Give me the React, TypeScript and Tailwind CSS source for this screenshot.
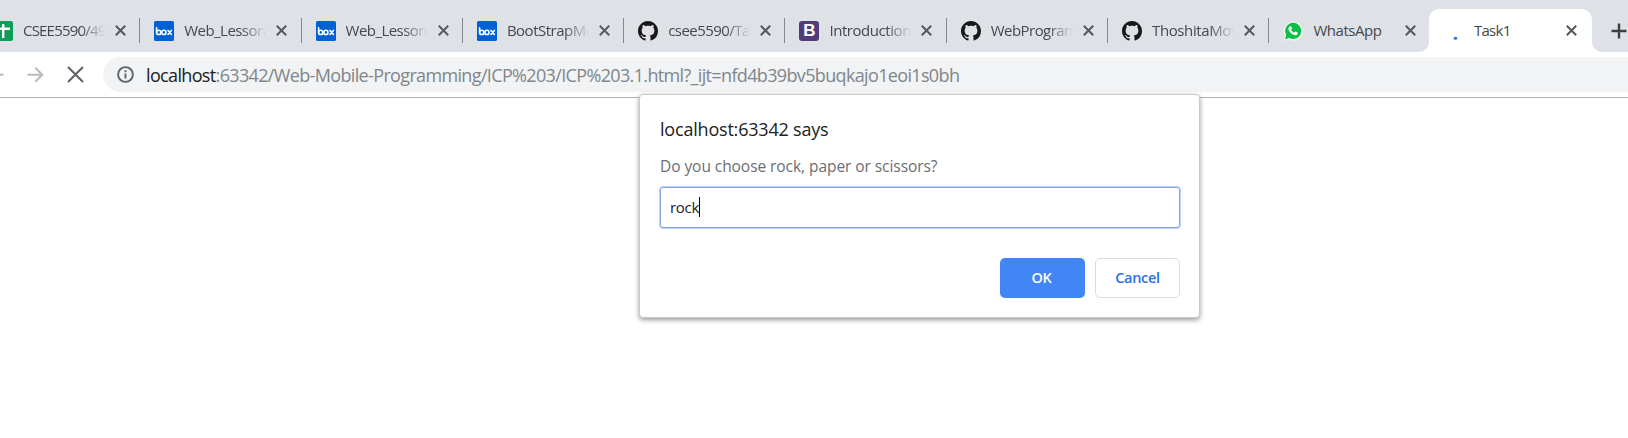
import React from "react";

type IconKind = "sheet" | "box" | "github" | "bootstrap" | "whatsapp" | "loading";

interface TabInfo {
  title: string;
  icon: IconKind;
  track: string;
}

const tabs: TabInfo[] = [
  { title: "CSEE5590/49", icon: "sheet", track: "tracking-[-0.8px]" },
  { title: "Web_Lesson", icon: "box", track: "tracking-[-0.55px]" },
  { title: "Web_Lesson", icon: "box", track: "tracking-[-0.55px]" },
  { title: "BootStrapMo", icon: "box", track: "tracking-[-0.5px]" },
  { title: "csee5590/Ta", icon: "github", track: "tracking-[-0.55px]" },
  { title: "Introduction", icon: "bootstrap", track: "tracking-[-0.45px]" },
  { title: "WebProgram", icon: "github", track: "tracking-[-0.55px]" },
  { title: "ThoshitaMov", icon: "github", track: "tracking-[-0.4px]" },
  { title: "WhatsApp", icon: "whatsapp", track: "tracking-[-0.4px]" },
];

function Favicon({ kind }: { kind: IconKind }) {
  switch (kind) {
    case "sheet":
      return (
        <svg className="size-5" viewBox="0 0 20 20">
          <rect width="20" height="20" rx="2" fill="#0f9d58" />
          <path d="M3 7.8h14M10.2 3v14" stroke="#fff" strokeWidth="2.4" />
        </svg>
      );
    case "box":
      return (
        <svg className="size-5" viewBox="0 0 20 20">
          <rect width="20" height="20" rx="1.6" fill="#0061d5" />
          <g fill="none" stroke="#fff" strokeWidth="1.6" strokeLinecap="round">
            <path d="M2.600 6.800v4.500" />
            <circle cx="4.700" cy="11.400" r="2.100" />
            <circle cx="9.900" cy="11.400" r="2.100" />
            <path d="M14 9.400l3.400 4.100M17.400 9.400L14 13.500" />
          </g>
        </svg>
      );
    case "github":
      return (
        <svg className="size-5" viewBox="0 0 16 16" fill="#191717">
          <path d="M8 0C3.58 0 0 3.58 0 8c0 3.54 2.29 6.53 5.47 7.59.4.07.55-.17.55-.38 0-.19-.01-.82-.01-1.49-2.01.37-2.53-.49-2.69-.94-.09-.23-.48-.94-.82-1.13-.28-.15-.68-.52-.01-.53.63-.01 1.08.58 1.23.82.72 1.21 1.87.87 2.33.66.07-.52.28-.87.51-1.07-1.78-.2-3.64-.89-3.64-3.95 0-.87.31-1.59.82-2.15-.08-.2-.36-1.02.08-2.12 0 0 .67-.21 2.2.82.64-.18 1.32-.27 2-.27s1.36.09 2 .27c1.53-1.04 2.2-.82 2.2-.82.44 1.1.16 1.92.08 2.12.51.56.82 1.27.82 2.15 0 3.07-1.87 3.75-3.65 3.95.29.25.54.73.54 1.48 0 1.07-.01 1.93-.01 2.2 0 .21.15.46.55.38A8.01 8.01 0 0 0 16 8c0-4.42-3.58-8-8-8z" />
        </svg>
      );
    case "bootstrap":
      return (
        <span className="flex size-5 items-center justify-center rounded-[3px] bg-[#533b78] font-['Liberation_Sans',sans-serif] text-[17px] leading-none font-bold text-white">
          B
        </span>
      );
    case "whatsapp":
      return (
        <svg className="size-5" viewBox="0 0 20 20">
          <path d="M.4 20l1.4-5.2A9.6 9.6 0 1 1 5.6 18.600z" fill="#f4f6f5" />
          <circle cx="10.2" cy="9.900" r="8.100" fill="#0bc143" />
          <path d="M2 18.300l1.2-4.500 3.200 3.300z" fill="#0bc143" />
          <path
            d="M7.200 5.300c.5-.2.9-.1 1.100.4l.7 1.600c.1.400-.5 1-.8 1.400.7 1.400 1.700 2.300 3.100 2.900.5-.4.900-1.200 1.400-1l1.800.9c.5.300.300 1.200 0 1.700-.6.900-1.900 1.200-3 .9-3-.8-5.200-3-6-5.500-.4-1.300.5-2.800 1.700-3.300z"
            fill="#fff"
          />
        </svg>
      );
    default:
      return (
        <svg className="size-5" viewBox="0 0 20 20">
          <ellipse cx="12.500" cy="17.300" rx="1.800" ry="1.500" fill="#1a73e8" />
        </svg>
      );
  }
}

function CloseIcon() {
  return (
    <svg className="size-[11px] shrink-0" viewBox="0 0 11 11">
      <path d="M.8.8l9.400 9.400M10.200.8L.8 10.200" stroke="#55585c" strokeWidth="2" />
    </svg>
  );
}

function Tab({ tab }: { tab: TabInfo }) {
  return (
    <div className="flex h-[25px] w-[161.300px] shrink-0 items-center border-r border-[#85888c] pl-[14px]">
      <Favicon kind={tab.icon} />
      <span
        className={`ml-[10px] w-[82px] overflow-hidden mask-r-from-70% mask-r-to-100% pb-px text-[15px] leading-[19px] whitespace-nowrap text-[#45484c] ${tab.track}`}
      >
        {tab.title}
      </span>
      <span className="ml-[10px] flex">
        <CloseIcon />
      </span>
    </div>
  );
}

function TabStrip() {
  return (
    <div className="flex h-[52px] bg-[#dee1e6]">
      <div className="-ml-[21px] flex w-[1440px] shrink-0 pt-[18px]">
        {tabs.map((tab, i) =>
          i < tabs.length - 1 ? (
            <Tab key={i} tab={tab} />
          ) : (
            <div key={i} className="flex h-[25px] items-center pl-[14px]">
              <Favicon kind={tab.icon} />
              <span className="ml-[10px] w-[82px] pb-px text-[15px] leading-[19px] tracking-[-0.45px] text-[#45484c]">{tab.title}</span>
              <span className="ml-[10px] flex">
                <CloseIcon />
              </span>
            </div>
          ),
        )}
      </div>
      <svg className="mt-[42px] h-[10px] w-[10px] shrink-0" viewBox="0 0 10 10">
        <path d="M10 0v10H0a10 10 0 0 0 10-10z" fill="#fff" />
      </svg>
      <div className="mt-[9px] flex w-[163px] shrink-0 items-center rounded-t-[10px] bg-white pt-[9px] pb-[9px] pl-[14px]">
        <Favicon kind="loading" />
        <span className="ml-[11px] w-[81px] pb-px text-[15px] leading-[19px] tracking-[-0.75px] text-[#45484c]">Task1</span>
        <span className="ml-[11px] flex">
          <CloseIcon />
        </span>
      </div>
      <svg className="mt-[42px] h-[10px] w-[10px] shrink-0" viewBox="0 0 10 10">
        <path d="M0 0v10h10A10 10 0 0 1 0 0z" fill="#fff" />
      </svg>
      <svg className="mt-[23px] ml-[9px] size-4 shrink-0" viewBox="0 0 16 16">
        <path d="M8 .5v15M.5 8h15" stroke="#3c4043" strokeWidth="2.400" />
      </svg>
    </div>
  );
}

function Toolbar() {
  return (
    <div className="flex h-[46px] items-start border-b border-[#b0b1b3] bg-white pt-[5px]">
      <div className="flex h-[35px] w-[103px] shrink-0 items-center">
        <svg className="h-4 w-[4px]" viewBox="0 0 4 16">
          <path d="M0 7.700h3.500" stroke="#b5b6b8" strokeWidth="2" />
        </svg>
        <svg className="ml-[23px] h-4 w-[17px]" viewBox="0 0 17 16">
          <path d="M.5 7.700h15M8.300.7l7 7-7 7" fill="none" stroke="#b8babc" strokeWidth="2" />
        </svg>
        <svg className="ml-[23px] size-[17px]" viewBox="0 0 17 17">
          <path d="M1 1l15 15M16 1L1 16" stroke="#5f6368" strokeWidth="2.100" />
        </svg>
      </div>
      <div className="flex h-[35px] flex-1 items-center rounded-l-full bg-[#f1f3f4] pl-[14px]">
        <svg className="size-[17px] shrink-0" viewBox="0 0 17 17">
          <circle cx="8.500" cy="8.500" r="7.400" fill="none" stroke="#5f6368" strokeWidth="1.900" />
          <path d="M8.500 7.500v5M8.500 4.300v2" stroke="#5f6368" strokeWidth="1.900" />
        </svg>
        <span className="ml-[12px] text-[18px] leading-6 tracking-[-0.650px] whitespace-nowrap text-[#80868b]">
          <span className="text-[#202124]">localhost</span>
          :63342/Web-Mobile-Programming/ICP%203/ICP%203.1.html?_ijt=nfd4b39bv5buqkajo1eoi1s0bh
        </span>
      </div>
    </div>
  );
}

function PromptDialog() {
  return (
    <div
      role="dialog"
      className="absolute top-[94px] left-[639px] h-[224px] w-[561px] rounded-[4px] border border-[#c9c9c9] bg-white px-[20px] pt-[21px] shadow-[0_2px_5px_rgba(0,0,0,0.4)]"
    >
      <h1 className="text-[18px] leading-[26px] tracking-[-0.2px] whitespace-nowrap text-[#202124]">
        <span>localhost:63342 says</span>
      </h1>
      <p className="mt-[13px] text-[15.500px] leading-[22px] tracking-[-0.06px] whitespace-nowrap text-[#6b6e73]">
        <span>Do you choose rock, paper or scissors?</span>
      </p>
      <div className="mt-[10px] flex h-[41px] w-[520px] items-center rounded-[3px] border border-[#82a3dc] pb-[2px] pl-[9px] shadow-[0_0_0_1px_#bdd3fa]">
        <span className="text-[15px] leading-5 tracking-[-0.3px] text-[#202124]">rock</span>
        <span className="h-5 w-px bg-black" />
      </div>
      <div className="mt-[30px] flex w-[520px] justify-end gap-[10px] text-[14.500px] font-semibold tracking-[-0.3px]">
        <button className="h-[40px] w-[85px] rounded-[5px] bg-[#4285f4] pr-[2px] pb-px text-white">OK</button>
        <button className="h-[40px] w-[85px] rounded-[5px] border border-[#dadce0] bg-white pb-px text-[#2a70e6]">Cancel</button>
      </div>
    </div>
  );
}

export default function App() {
  return (
    <div className="relative h-[438px] w-full overflow-hidden bg-white font-['Open_Sans','Noto_Sans',sans-serif]">
      <TabStrip />
      <Toolbar />
      <PromptDialog />
    </div>
  );
}
